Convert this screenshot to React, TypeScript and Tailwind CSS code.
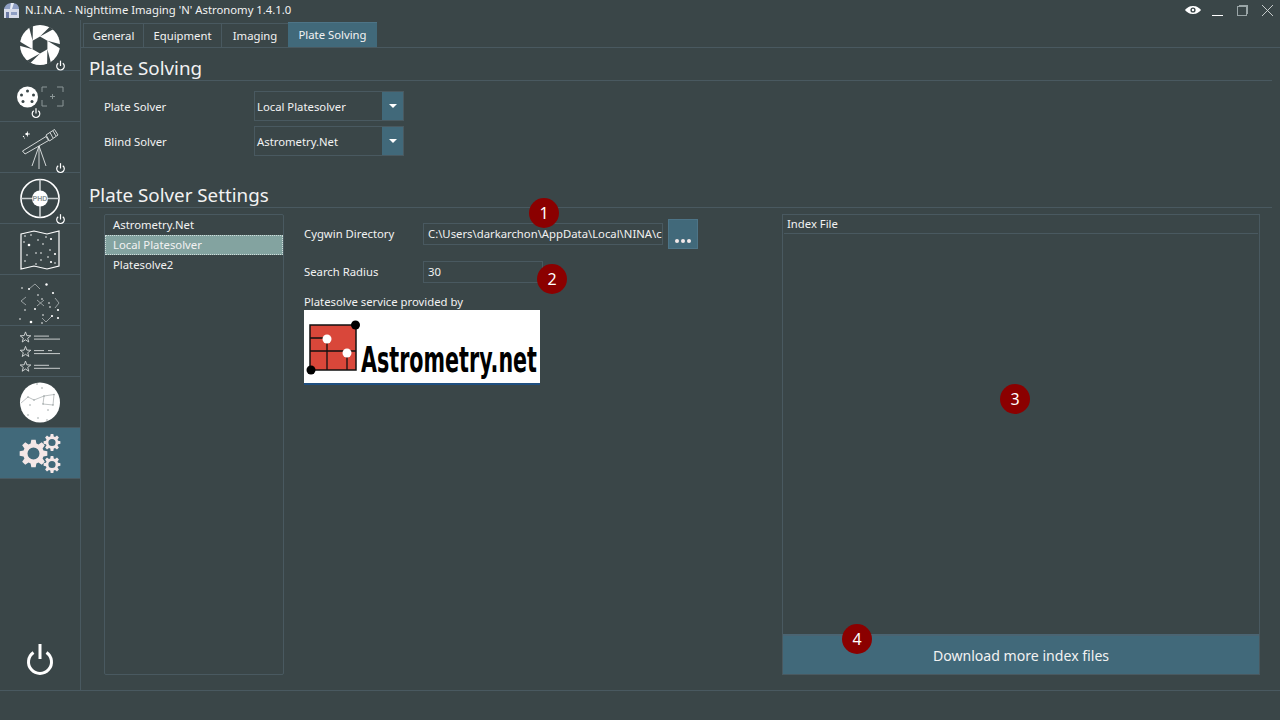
const font = { fontFamily: '"Noto Sans", "Open Sans", sans-serif' };

function gearPath(cx: number, cy: number, r: number, hole: number, teeth: number) {
  const pts: string[] = [];
  const inner = r * 0.74;
  for (let i = 0; i < teeth; i++) {
    const a = (i / teeth) * Math.PI * 2;
    const s = (Math.PI * 2) / teeth;
    const seq = [
      [inner, a - s * 0.36],
      [r, a - s * 0.2],
      [r, a + s * 0.2],
      [inner, a + s * 0.36],
    ];
    seq.forEach(([rad, t]) => pts.push(`${(cx + rad * Math.cos(t)).toFixed(2)} ${(cy + rad * Math.sin(t)).toFixed(2)}`));
  }
  const ring = `M${cx - hole} ${cy}a${hole} ${hole} 0 1 0 ${hole * 2} 0a${hole} ${hole} 0 1 0 ${-hole * 2} 0Z`;
  return `M${pts.join('L')}Z ${ring}`;
}

function PowerMark({ x, y, r = 3.6 }: { x: number; y: number; r?: number }) {
  return (
    <g fill="none" stroke="#fff" strokeWidth="1.2">
      <path d={`M${x - r * 0.6} ${y - r * 0.75}A${r} ${r} 0 1 0 ${x + r * 0.6} ${y - r * 0.75}`} />
      <path d={`M${x} ${y - r * 1.4}V${y}`} />
    </g>
  );
}

function Dots({ pts, r = 0.8 }: { pts: number[][]; r?: number }) {
  return (
    <g fill="#fff">
      {pts.map(([x, y, s], i) => (
        <circle key={i} cx={x} cy={y} r={s ?? r} />
      ))}
    </g>
  );
}

function ApertureIcon() {
  return (
    <>
      <circle cx="40" cy="25" r="20" fill="#fff" />
      <polygon points="40,16.5 47.4,20.75 47.4,29.25 40,33.5 32.6,29.25 32.6,20.75" fill="#3a4648" />
      {[0, 60, 120, 180, 240, 300].map((a) => (
        <polygon key={a} points="40,16.5 53.2,9.2 49.6,7 " fill="#3a4648" transform={`rotate(${a} 40 25)`} />
      ))}
      <circle cx="60.5" cy="44.5" r="5" fill="#3a4648" />
      <PowerMark x={60.5} y={46} r={3.8} />
    </>
  );
}

function FilterIcon() {
  return (
    <>
      <circle cx="27.5" cy="26" r="10.5" fill="#fff" />
      <g fill="#3a4648">
        {[[27.5, 20], [21.5, 24], [33.5, 24], [23, 30.5], [32, 30.5]].map(([x, y], i) => (
          <circle key={i} cx={x} cy={y} r="1.5" />
        ))}
      </g>
      <path d="M42 21V16h5M57 16h6v5M42 29v6h5M57 35h6v-6M52.5 23v5M50 25.5h5" fill="none" stroke="#8b9697" strokeWidth="1" />
      <circle cx="36" cy="41" r="5" fill="#3a4648" />
      <PowerMark x={36} y={42.5} r={3.8} />
    </>
  );
}

function TelescopeIcon() {
  return (
    <>
      <g fill="none" stroke="#e3e6e6" strokeWidth="0.9">
        <path d="M22.5 29 L46 14.5 L48.5 18.5 L25 32 Z" />
        <path d="M46 13 L54.5 7.5 L58 13 L49.5 19 Z" />
        <path d="M50 10.5 L53 16 M53 9 L56 14" />
        <path d="M39 24 L32 44 M39 24 L46 44 M39 24 V47" />
      </g>
      <Dots pts={[[23.5, 14.5, 0.7], [27, 12, 1.3], [24.5, 16, 0.5]]} />
      <path d="M27.5 9.5v5M25 12h5" stroke="#fff" strokeWidth="0.8" />
      <circle cx="60.5" cy="45" r="5" fill="#3a4648" />
      <PowerMark x={60.5} y={46.5} r={3.8} />
    </>
  );
}

function GuiderIcon() {
  return (
    <>
      <circle cx="40" cy="25.5" r="19" fill="none" stroke="#fff" strokeWidth="1.6" />
      <path d="M21 25.5H59M40 6.5V44.5" stroke="#c9cecf" strokeWidth="1.6" />
      <circle cx="40" cy="25.5" r="8" fill="#fff" />
      <text x="40" y="28" textAnchor="middle" fontSize="7" fontWeight="700" fill="#8b9697" fontFamily="Liberation Sans, sans-serif">PHD</text>
      <circle cx="60.5" cy="45" r="5" fill="#3a4648" />
      <PowerMark x={60.5} y={46.5} r={3.8} />
    </>
  );
}

function MapIcon() {
  return (
    <>
      <path d="M21 10 L34 7 L47 10 L59 7 V42 L47 45 L34 42 L21 45 Z" fill="none" stroke="#fff" strokeWidth="1.2" />
      <Dots
        pts={[[25, 12], [31, 11], [24, 18], [29, 21, 1.3], [38, 16], [43, 20], [51, 15, 1.1], [50, 26], [55, 30, 1.1], [27, 31], [36, 29], [41, 29], [48, 33], [25, 37], [41, 36], [51, 38, 1.1], [55, 39], [36, 40], [46, 13]]}
      />
    </>
  );
}

function ConstellationIcon() {
  return (
    <>
      <g fill="none" stroke="#aeb5b6" strokeWidth="0.8">
        <path d="M29 14L35 9L40 14M26 22L21 26L26 30M55 23L59 28L55 33M37 25L44 31M44 25L37 31M42 43L46 47L52 41" />
      </g>
      <Dots
        pts={[[22, 13], [29, 14, 1], [46.5, 9.5, 1.2], [53, 18, 1.1], [38, 20], [42, 24], [49, 28], [58, 35, 1.1], [25, 35], [35, 34, 1], [43, 40], [52, 41, 1.1], [58, 43, 1.1], [20, 44], [31, 47, 1.3], [42, 48], [50, 32]]}
      />
    </>
  );
}

function StarRow({ y, dashed }: { y: number; dashed?: boolean }) {
  const pts = [0, 1, 2, 3, 4, 5, 6, 7, 8, 9]
    .map((i) => {
      const a = -Math.PI / 2 + (i * Math.PI) / 5;
      const r = i % 2 ? 2.3 : 5.6;
      return `${(25.5 + r * Math.cos(a)).toFixed(2)},${(y + r * Math.sin(a)).toFixed(2)}`;
    })
    .join(' ');
  return (
    <g fill="none" stroke="#d9dcdc" strokeWidth="0.9">
      <polygon points={pts} />
      <path d={dashed ? `M34 ${y - 1.4}H44M48 ${y - 1.4}H52M34 ${y + 1.6}H60` : `M34 ${y - 1.4}H49M34 ${y + 1.6}H60`} />
    </g>
  );
}

function SkyIcon() {
  return (
    <>
      <circle cx="40" cy="25.5" r="20" fill="#fff" />
      <path d="M21 26L28 20L34 23L44 19L54 17.5M44 19L43 27L53 28L54 17.5" fill="none" stroke="#a3a9aa" strokeWidth="0.7" />
      <g fill="#9aa1a2">
        {[[37, 7], [42, 11], [28, 20], [34, 23], [44, 19], [54, 17.5], [43, 27], [53, 28], [30, 28], [48, 33], [28, 38], [38, 41], [47, 43]].map(([x, y], i) => (
          <circle key={i} cx={x} cy={y} r="0.8" />
        ))}
      </g>
    </>
  );
}

function GearsIcon() {
  return (
    <path
      fillRule="evenodd"
      fill="#f4e7e7"
      d={`${gearPath(33.5, 25.5, 14, 6, 8)} ${gearPath(52, 14.5, 8.5, 3.6, 8)} ${gearPath(52, 36.5, 8.5, 3.6, 8)}`}
    />
  );
}

function NavItem({ active, children }: { active?: boolean; children: React.ReactNode }) {
  return (
    <div className={`h-[51px] border-b border-[#495960] ${active ? 'bg-[#41697a]' : ''}`}>
      <svg width="80" height="50" viewBox="0 0 80 50" className="block overflow-visible">
        {children}
      </svg>
    </div>
  );
}

function Badge({ n, className }: { n: number; className: string }) {
  return (
    <div className={`absolute w-[30px] h-[30px] rounded-full bg-[#8b0000] text-white text-[16px] flex items-center justify-center ${className}`}>
      {n}
    </div>
  );
}

function Caret() {
  return <div className="w-0 h-0 border-l-[4px] border-r-[4px] border-t-[4px] border-l-transparent border-r-transparent border-t-white" />;
}

function Combo({ label, value }: { label: string; value: string }) {
  return (
    <div className="flex items-center h-[30px]">
      <span className="w-[150px] pt-[2px]">{label}</span>
      <div className="w-[150px] h-[30px] flex items-center border border-[#495960]">
        <span className="flex-1 pl-[2px] pt-[2px]">{value}</span>
        <div className="w-[21px] h-full bg-[#41697a] flex items-center justify-center">
          <Caret />
        </div>
      </div>
    </div>
  );
}

function Heading({ children }: { children: React.ReactNode }) {
  return <div className="text-[18.8px] leading-[25px] border-b border-[#495960] h-[33px] pt-[8px] text-[#f2f2f2]">{children}</div>;
}

function AstrometryLogo() {
  return (
    <div className="w-[236px] h-[75px] bg-white border-b-2 border-[#1f4f80]">
      <svg width="236" height="73" viewBox="0 0 236 73" className="block">
        <rect x="6" y="15" width="46" height="45" fill="#d9473a" stroke="#111" strokeWidth="1.5" />
        <path d="M6 28H23V60M6 41H52M43 41V60" fill="none" stroke="#111" strokeWidth="1.3" />
        <circle cx="23" cy="29" r="4.5" fill="#fff" />
        <circle cx="43" cy="43" r="4.5" fill="#fff" />
        <circle cx="51.5" cy="15" r="4.5" fill="#000" />
        <circle cx="7" cy="60" r="4.5" fill="#000" />
        <text
          x="57"
          y="62"
          fontSize="36"
          fontWeight="700"
          textLength="176"
          lengthAdjust="spacingAndGlyphs"
          fill="#000"
          fontFamily="DejaVu Sans Condensed, DejaVu Sans, sans-serif"
        >
          Astrometry.net
        </text>
      </svg>
    </div>
  );
}

export default function App() {
  return (
    <div className="relative w-[1280px] h-[720px] overflow-hidden bg-[#3a4648] text-[#f2f2f2] text-[11.3px] flex flex-col" style={font}>
      {/* Title bar */}
      <div className="h-[20px] flex items-center pl-[3px] shrink-0">
        <svg width="17" height="17" viewBox="0 0 17 17" className="shrink-0">
          <path d="M1 7C2 3 5 1 9 1s7 2 7 6z" fill="#8f9fc4" />
          <path d="M8 1l3 0-2 6H7z" fill="#e8ecf5" />
          <rect x="1" y="7" width="15" height="9" fill="#d7dcea" />
          <rect x="3" y="10" width="3" height="6" fill="#6c7aa5" />
          <rect x="8" y="10" width="6" height="3" fill="#8f9fc4" />
        </svg>
        <span className="ml-[5px] leading-none whitespace-nowrap">N.I.N.A. - Nighttime Imaging 'N' Astronomy 1.4.1.0</span>
        <div className="ml-auto flex items-center h-full">
          <svg width="16" height="8" viewBox="0 0 16 8" className="mb-[1px]">
            <path d="M0 4C3 0.5 5.5 0 8 0s5 0.5 8 4c-3 3.5-5.5 4-8 4S3 7.5 0 4Z" fill="#fff" />
            <circle cx="8" cy="4" r="2.6" fill="#3a4648" />
            <circle cx="8" cy="4" r="1.2" fill="#fff" />
          </svg>
          <div className="ml-[11px] mt-[10px] w-[11px] h-[1px] bg-white" />
          <div className="relative ml-[14px] mt-[1px] w-[10px] h-[10px] border border-[#9aa5a7]">
            <div className="absolute top-[-2px] right-[-2px] w-[9px] h-[9px] border-t border-r border-[#9aa5a7]" />
          </div>
          <svg width="11" height="11" viewBox="0 0 11 11" className="ml-[15px] mr-[7px]" fill="none" stroke="#d5d9d9" strokeWidth="0.9">
            <path d="M0 0L11 11M11 0L0 11" />
          </svg>
        </div>
      </div>

      <div className="flex-1 flex min-h-0">
        {/* Sidebar */}
        <div className="w-[81px] shrink-0 border-r border-[#495960] flex flex-col">
          <NavItem><ApertureIcon /></NavItem>
          <NavItem><FilterIcon /></NavItem>
          <NavItem><TelescopeIcon /></NavItem>
          <NavItem><GuiderIcon /></NavItem>
          <NavItem><MapIcon /></NavItem>
          <NavItem><ConstellationIcon /></NavItem>
          <NavItem>
            <StarRow y={11.5} />
            <StarRow y={26} dashed />
            <StarRow y={40.7} />
          </NavItem>
          <NavItem><SkyIcon /></NavItem>
          <NavItem active><GearsIcon /></NavItem>
          <div className="flex-1 flex items-end justify-center pb-[15px]">
            <svg width="28" height="31" viewBox="0 0 28 31" fill="none" stroke="#fff" strokeWidth="3">
              <path d="M7.5 8.5A11.5 11.5 0 1 0 20.5 8.5" />
              <path d="M14 0V15" />
            </svg>
          </div>
        </div>

        {/* Content */}
        <div className="flex-1 min-w-0 flex flex-col">
          <div className="h-[28px] flex items-end pl-[2px] border-b border-[#495960] shrink-0">
            <div className="h-[24px] w-[61px] pt-[2px] flex items-center justify-center border border-b-0 border-[#495960]">General</div>
            <div className="h-[24px] w-[78px] pt-[2px] flex items-center justify-center border-t border-r border-[#495960]">Equipment</div>
            <div className="h-[24px] w-[66px] pt-[2px] flex items-center justify-center border-t border-[#495960]">Imaging</div>
            <div className="h-[25px] w-[89px] flex items-center justify-center bg-[#41697a] border-t border-[#4d7487]">Plate Solving</div>
          </div>

          <div className="flex-1 min-h-0 pl-[8px] pr-[8px] flex flex-col">
            <Heading>Plate Solving</Heading>
            <div className="pl-[15px] pt-[10px] flex flex-col gap-[5px] h-[94px] shrink-0">
              <Combo label="Plate Solver" value="Local Platesolver" />
              <Combo label="Blind Solver" value="Astrometry.Net" />
            </div>
            <Heading>Plate Solver Settings</Heading>

            <div className="flex-1 min-h-0 flex pl-[15px] pt-[6px] pb-[15px]">
              {/* Solver list */}
              <div className="w-[180px] shrink-0 border border-[#495960] rounded-[2px]">
                <div className="h-[20px] pl-[8px] flex items-center">Astrometry.Net</div>
                <div className="h-[20px] pl-[7px] flex items-center bg-[#83a3a0] border border-dotted border-[#cfdcda]">Local Platesolver</div>
                <div className="h-[20px] pl-[8px] flex items-center">Platesolve2</div>
              </div>

              {/* Solver settings */}
              <div className="w-[498px] shrink-0 pl-[20px] pt-[5px]">
                <div className="flex items-center h-[30px]">
                  <span className="w-[119px]">Cygwin Directory</span>
                  <div className="w-[240px] h-[22px] border border-[#495960] pl-[4px] flex items-center overflow-hidden whitespace-nowrap">
                    C:\Users\darkarchon\AppData\Local\NINA\c
                  </div>
                  <div className="ml-[5px] w-[30px] h-[30px] bg-[#41697a] border border-[#4d7487] flex items-end justify-center gap-[2px] pb-[5px]">
                    <span className="w-[4px] h-[4px] rounded-full bg-[#f2e9e9]" />
                    <span className="w-[4px] h-[4px] rounded-full bg-[#f2e9e9]" />
                    <span className="w-[4px] h-[4px] rounded-full bg-[#f2e9e9]" />
                  </div>
                </div>
                <div className="flex items-center h-[22px] mt-[12px]">
                  <span className="w-[119px] pt-[1px]">Search Radius</span>
                  <div className="w-[120px] h-[22px] border border-[#495960] pl-[4px] pt-[1px] flex items-center">30</div>
                </div>
                <div className="mt-[11px] h-[16px] leading-[16px]">Platesolve service provided by</div>
                <AstrometryLogo />
              </div>

              {/* Index files */}
              <div className="w-[478px] shrink-0 border border-[#495960] flex flex-col">
                <div className="h-[19px] mx-[1px] pl-[3px] flex items-center border-b border-[#495960] shrink-0">Index File</div>
                <div className="flex-1" />
                <div className="h-[40px] bg-[#41697a] border-t-2 border-[#4a6472] pt-[1px] text-[14.1px] flex items-center justify-center shrink-0">
                  Download more index files
                </div>
              </div>
            </div>
          </div>
        </div>
      </div>

      {/* Status bar */}
      <div className="h-[30px] border-t border-[#495960] shrink-0" />

      <Badge n={1} className="left-[529px] top-[198px]" />
      <Badge n={2} className="left-[537px] top-[264px]" />
      <Badge n={3} className="left-[1000px] top-[384px]" />
      <Badge n={4} className="left-[842px] top-[624px]" />
    </div>
  );
}
